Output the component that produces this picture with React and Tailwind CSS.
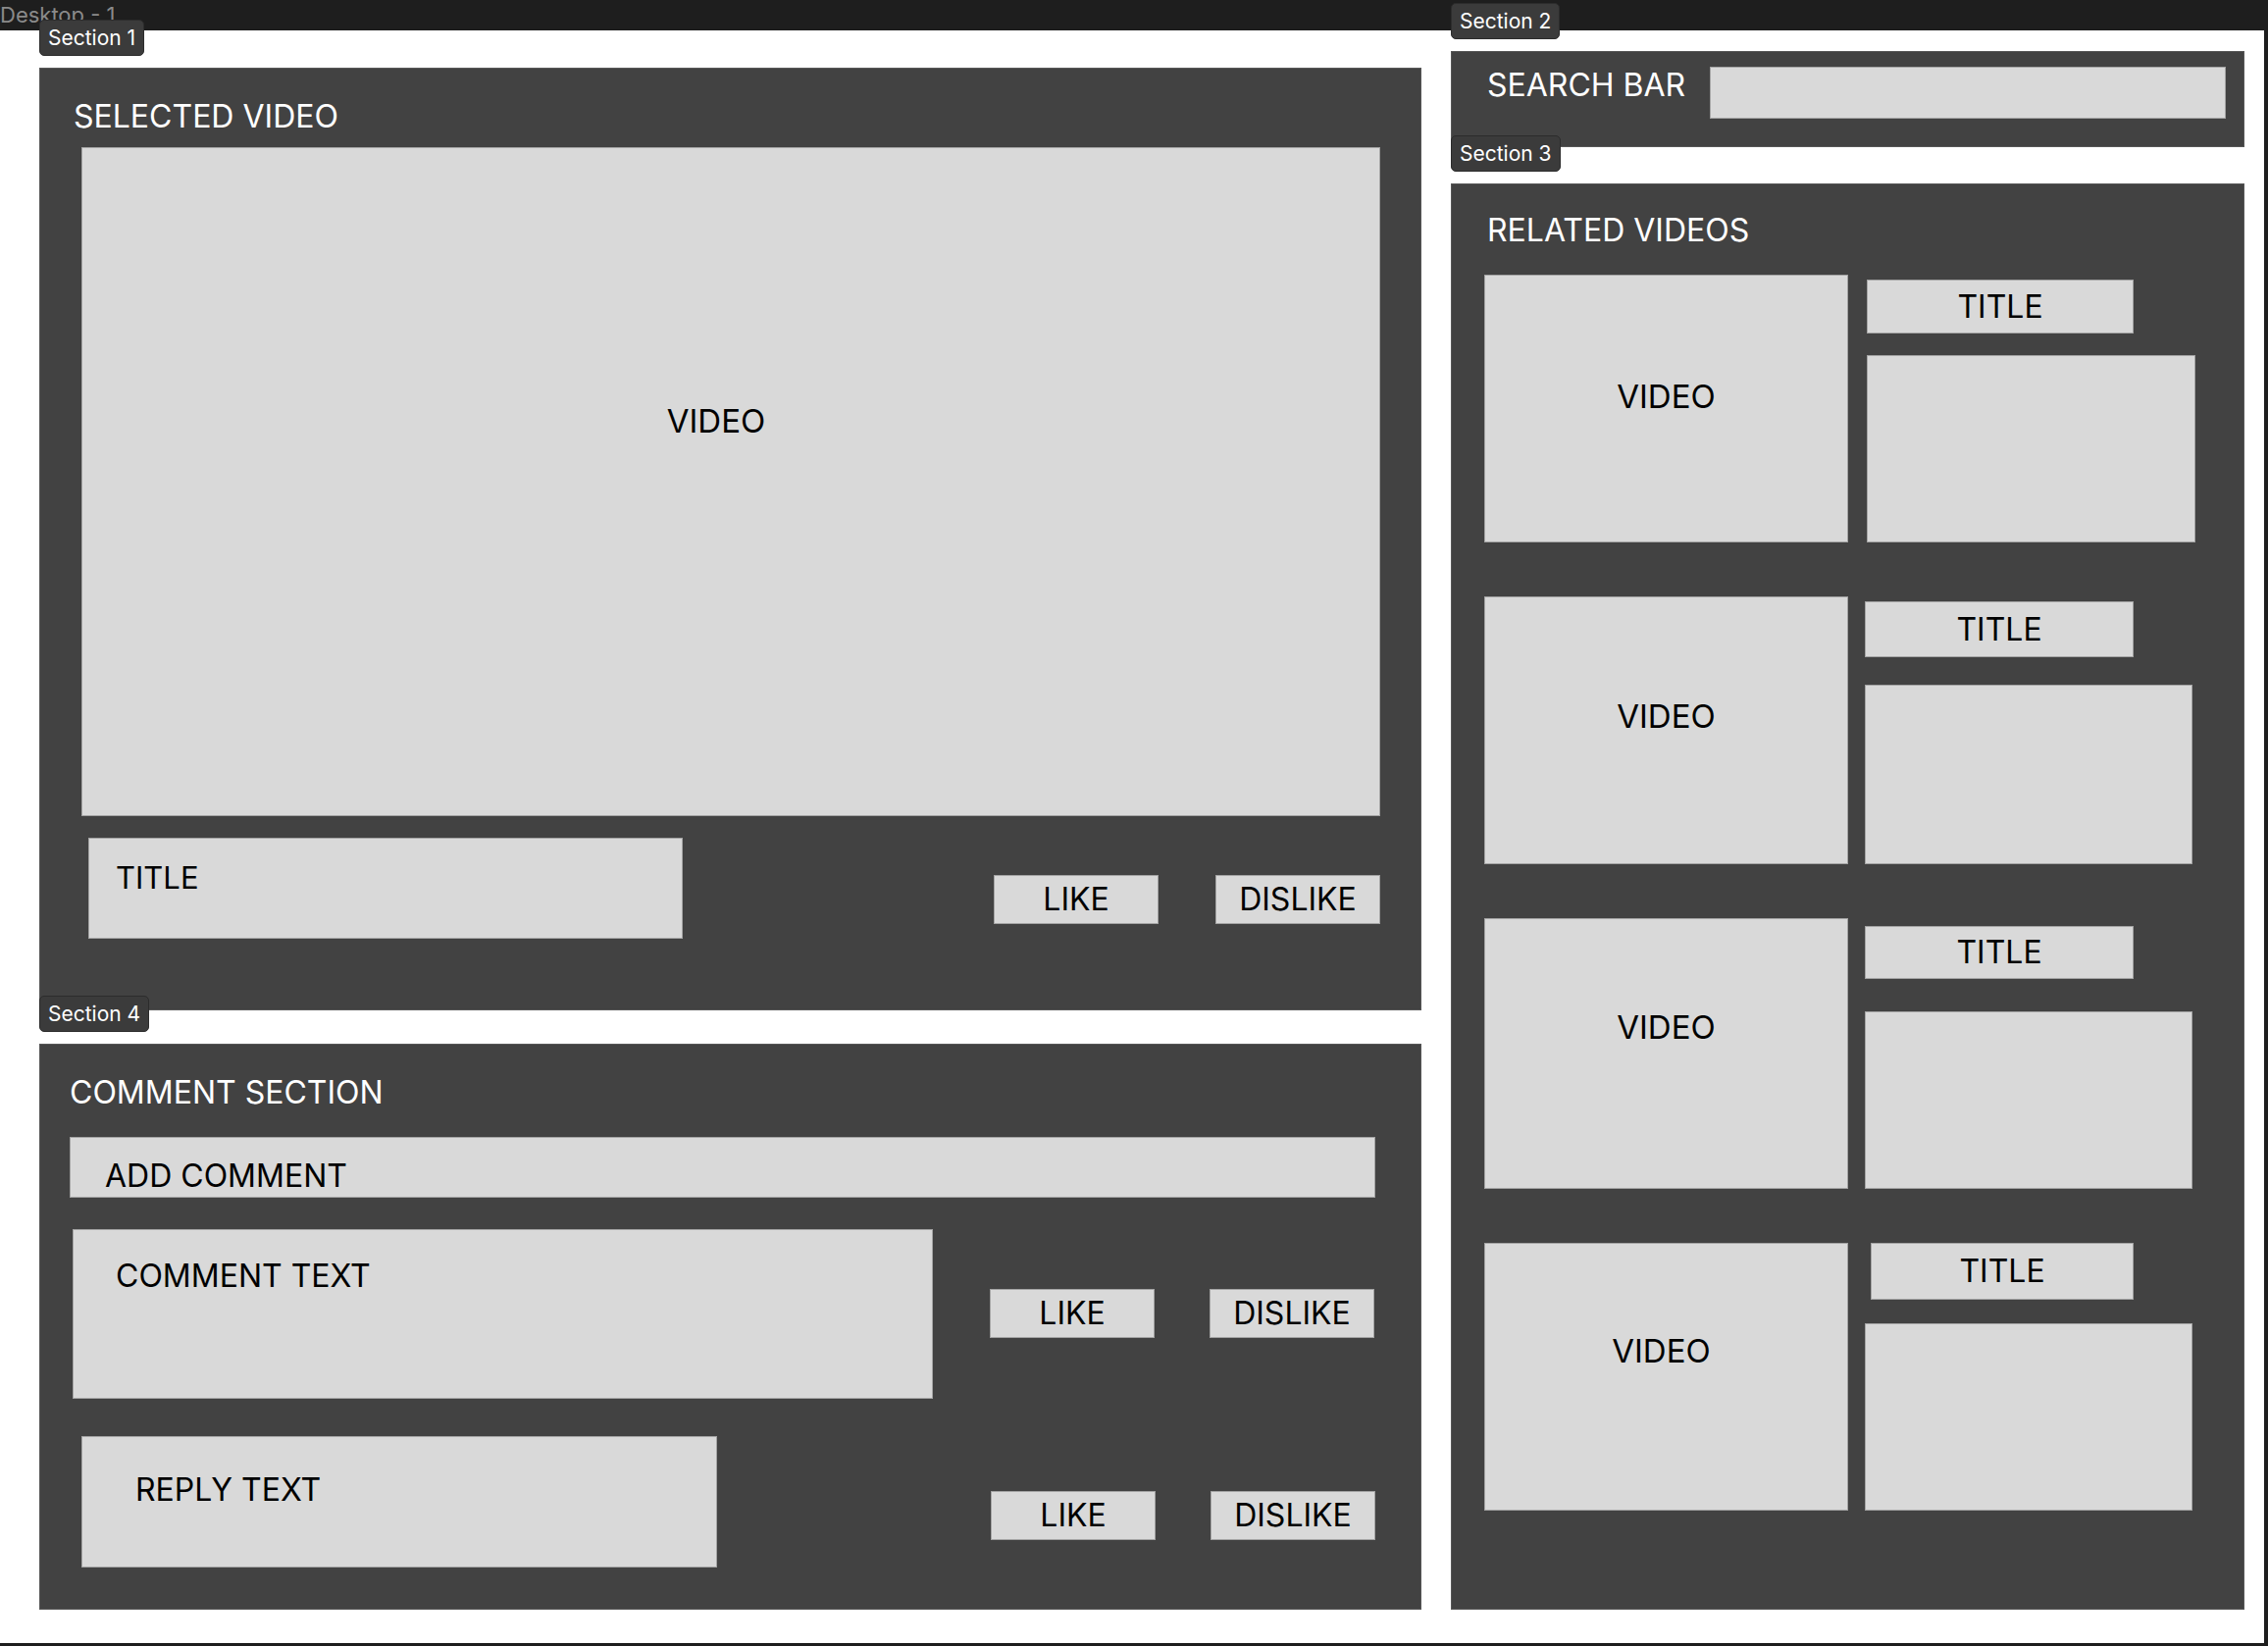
const font = { fontFamily: "Inter, 'Noto Sans', sans-serif" };

const relatedVideos = [
  {
    video: "h-[273px] pt-[107px]",
    side: "ml-[17px]",
    title: "ml-[2px] mt-[5px] w-[272px] h-[55px]",
    desc: "ml-[2px] mt-[22px] w-[335px] h-[191px]",
  },
  {
    video: "h-[273px] pt-[105px]",
    side: "ml-[17px]",
    title: "mt-[5px] w-[274px] h-[57px]",
    desc: "mt-[28px] w-[334px] h-[183px]",
  },
  {
    video: "h-[276px] pt-[94px]",
    side: "ml-[17px]",
    title: "mt-[8px] w-[274px] h-[54px]",
    desc: "mt-[33px] w-[334px] h-[181px]",
  },
  {
    video: "h-[273px] pt-[93px] pr-[10px]",
    side: "ml-[17px]",
    title: "ml-[6px] mt-0 w-[268px] h-[58px]",
    desc: "mt-[24px] w-[334px] h-[191px]",
  },
];

const Box = ({ className = "", children }) => (
  <div
    className={`bg-[#d9d9d9] border border-[#a4a4a4] text-black leading-none shrink-0 ${className}`}
  >
    {children}
  </div>
);

const Panel = ({ label, className = "", children }) => (
  <section className={`relative bg-[#424242] border border-[#575757] ${className}`}>
    <div className="absolute -top-[50px] -left-px h-[37px] px-[8px] flex items-center rounded-[5px] bg-[#3b3b3b] border border-[#2c2c2c] text-white text-[21px] leading-none">
      {label}
    </div>
    {children}
  </section>
);

const VoteButtons = ({ className = "", gap = "ml-[58px]" }) => (
  <div className={`flex ${className}`}>
    <Box className="w-[168px] h-[50px] flex items-center justify-center text-[32px]">
      LIKE
    </Box>
    <Box className={`${gap} w-[168px] h-[50px] flex items-center justify-center text-[32px]`}>
      DISLIKE
    </Box>
  </div>
);

const SelectedVideo = () => (
  <Panel label="Section 1" className="w-[1409px] h-[961px]">
    <div className="pt-[33px] pl-[34px] text-[32px] leading-none text-white">
      SELECTED VIDEO
    </div>
    <Box className="mt-[15px] ml-[42px] w-[1324px] h-[682px] flex justify-center pt-[262px] pr-[30px] text-[33px]">
      VIDEO
    </Box>
    <div className="mt-[22px] flex items-start">
      <Box className="ml-[49px] w-[606px] h-[103px] pl-[27px] pt-[24px] text-[31px]">TITLE</Box>
      <VoteButtons className="ml-[317px] mt-[38px]" />
    </div>
  </Panel>
);

const CommentSection = () => (
  <Panel label="Section 4" className="w-[1409px] h-[577px]">
    <div className="pt-[33px] pl-[30px] text-[32px] leading-none text-white">
      COMMENT SECTION
    </div>
    <Box className="mt-[29px] ml-[30px] w-[1331px] h-[62px] pl-[35px] pt-[23px] text-[32px]">
      ADD COMMENT
    </Box>
    <div className="mt-[32px] flex items-start">
      <Box className="ml-[33px] w-[877px] h-[173px] pl-[43px] pt-[31px] text-[32px]">
        COMMENT TEXT
      </Box>
      <VoteButtons className="ml-[58px] mt-[61px]" gap="ml-[56px]" />
    </div>
    <div className="mt-[38px] flex items-start">
      <Box className="ml-[42px] w-[648px] h-[134px] pl-[54px] pt-[38px] text-[32px]">
        REPLY TEXT
      </Box>
      <VoteButtons className="ml-[279px] mt-[56px]" gap="ml-[56px]" />
    </div>
  </Panel>
);

const SearchBar = () => (
  <Panel label="Section 2" className="w-[809px] h-[98px] flex items-start">
    <div className="pl-[36px] mt-[18px] text-[32px] leading-none text-white">SEARCH BAR</div>
    <Box className="ml-auto mr-[18px] mt-[15px] w-[526px] h-[53px]" />
  </Panel>
);

const RelatedVideos = () => (
  <Panel label="Section 3" className="w-[809px] h-[1454px]">
    <div className="pt-[31px] pl-[36px] text-[32px] leading-none text-white">
      RELATED VIDEOS
    </div>
    <div className="mt-[29px] pl-[33px] flex flex-col gap-[55px]">
      {relatedVideos.map((row, i) => (
        <div key={i} className="flex items-start">
          <Box className={`w-[371px] flex justify-center text-[33px] ${row.video}`}>VIDEO</Box>
          <div className={`flex flex-col items-start ${row.side}`}>
            <Box className={`flex items-center justify-center text-[32px] ${row.title}`}>
              TITLE
            </Box>
            <Box className={row.desc} />
          </div>
        </div>
      ))}
    </div>
  </Panel>
);

export default function App() {
  return (
    <div style={font} className="w-[2312px] h-[1678px] bg-[#1e1e1e] overflow-hidden">
      <div className="h-[31px] overflow-hidden">
        <div className="pt-[4px] text-[22px] leading-none text-[#8a8a8a]">Desktop - 1</div>
      </div>
      <div className="w-[2308px] h-[1644px] bg-white flex gap-[30px] pl-[40px]">
        <div className="pt-[38px] flex flex-col gap-[34px]">
          <SelectedVideo />
          <CommentSection />
        </div>
        <div className="pt-[21px] flex flex-col gap-[37px]">
          <SearchBar />
          <RelatedVideos />
        </div>
      </div>
    </div>
  );
}
